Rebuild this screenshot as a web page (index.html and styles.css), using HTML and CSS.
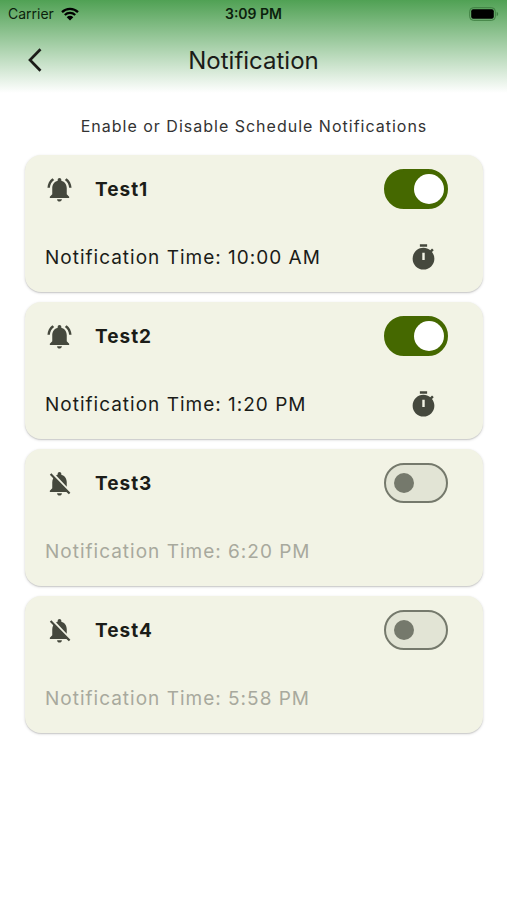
FILE: index.html
```html
<!DOCTYPE html>
<html lang="en">
<head>
<meta charset="utf-8">
<meta name="viewport" content="width=device-width, initial-scale=1">
<title>Notification</title>
<link rel="stylesheet" href="styles.css">
</head>
<body>
<svg class="sprite" aria-hidden="true">
  <symbol id="bell-on" viewBox="0 0 24 24"><path d="M7.58 4.08 6.15 2.65C3.75 4.48 2.17 7.3 2.03 10.5h2c.15-2.65 1.51-4.97 3.55-6.42zm12.39 6.42h2c-.15-3.2-1.73-6.02-4.12-7.85l-1.42 1.43c2.02 1.45 3.39 3.77 3.54 6.42zM18 11c0-3.07-1.64-5.64-4.5-6.32V4c0-.83-.67-1.5-1.5-1.5s-1.5.67-1.5 1.5v.68C7.63 5.36 6 7.92 6 11v5l-2 2v1h16v-1l-2-2v-5zm-6 11c.14 0 .27-.01.4-.04.65-.14 1.18-.58 1.44-1.18.1-.24.15-.5.15-.78h-4c.01 1.1.9 2 2.01 2z"/></symbol>
  <symbol id="bell-off" viewBox="0 0 24 24"><path d="M20 18.69 7.84 6.14 5.27 3.49 4 4.76l2.8 2.8v.01c-.52.99-.8 2.16-.8 3.42v5l-2 2v1h13.73l2 2L21 19.72l-1-1.03zM12 22c1.11 0 2-.89 2-2h-4c0 1.11.89 2 2 2zm6-7.32V11c0-3.08-1.64-5.64-4.5-6.32V4c0-.83-.67-1.5-1.5-1.5s-1.5.67-1.5 1.5v.68c-.15.03-.29.08-.42.12-.1.03-.2.07-.3.11h-.01c-.01 0-.01 0-.02.01-.23.09-.46.2-.68.31 0 0-.01 0-.01.01L18 14.68z"/></symbol>
  <symbol id="timer" viewBox="0 0 24 24"><path d="M19.03 7.39l1.42-1.42c-.45-.51-.9-.97-1.41-1.41L17.62 6c-1.55-1.26-3.5-2-5.62-2-4.97 0-9 4.03-9 9s4.02 9 9 9 9-4.03 9-9c0-2.12-.74-4.07-1.97-5.61zM13 14h-2V8h2v6zm2-13H9v2h6V1z"/></symbol>
</svg>

<header class="top">
  <div class="status">
    <div class="carrier">
      <span>Carrier</span>
      <svg class="wifi" viewBox="0 0 18 14" aria-hidden="true">
        <path d="M1 5.2a11.5 11.5 0 0 1 16 0M3.8 8a7.6 7.6 0 0 1 10.4 0" fill="none" stroke="currentColor" stroke-width="2.3"/>
        <path d="M9 13.6 5.7 10.2a4.7 4.7 0 0 1 6.6 0z" fill="currentColor"/>
      </svg>
    </div>
    <div class="clock">3:09 PM</div>
    <svg class="battery" viewBox="0 0 30 14" aria-hidden="true">
      <rect x=".7" y=".7" width="25.6" height="12.6" rx="3.6" fill="none" stroke="#3f7f42"/>
      <rect x="2.2" y="2.2" width="22.6" height="9.6" rx="2" fill="#000"/>
      <path d="M27.7 4.8c2 .8 2 3.6 0 4.4z" fill="#3f7f42"/>
    </svg>
  </div>
  <div class="bar">
    <button class="back" type="button" aria-label="Back">
      <svg viewBox="0 0 14 24" aria-hidden="true"><path d="M12.5 1.3 2 12l10.5 10.7" fill="none" stroke="currentColor" stroke-width="2.7"/></svg>
    </button>
    <h1 class="title">Notification</h1>
  </div>
</header>

<main class="content">
  <p class="intro">Enable or Disable Schedule Notifications</p>
  <section class="card">
    <div class="row">
      <svg class="icon"><use href="#bell-on"/></svg>
      <label class="name" for="t1">Test1</label>
      <input class="switch" type="checkbox" role="switch" id="t1" checked>
    </div>
    <div class="row">
      <p class="time">Notification Time: 10:00 AM</p>
      <button class="pick" type="button" aria-label="Change time"><svg class="icon"><use href="#timer"/></svg></button>
    </div>
  </section>
  <section class="card">
    <div class="row">
      <svg class="icon"><use href="#bell-on"/></svg>
      <label class="name" for="t2">Test2</label>
      <input class="switch" type="checkbox" role="switch" id="t2" checked>
    </div>
    <div class="row">
      <p class="time">Notification Time: 1:20 PM</p>
      <button class="pick" type="button" aria-label="Change time"><svg class="icon"><use href="#timer"/></svg></button>
    </div>
  </section>
  <section class="card">
    <div class="row">
      <svg class="icon"><use href="#bell-off"/></svg>
      <label class="name" for="t3">Test3</label>
      <input class="switch" type="checkbox" role="switch" id="t3">
    </div>
    <div class="row">
      <p class="time off">Notification Time: 6:20 PM</p>
    </div>
  </section>
  <section class="card">
    <div class="row">
      <svg class="icon"><use href="#bell-off"/></svg>
      <label class="name" for="t4">Test4</label>
      <input class="switch" type="checkbox" role="switch" id="t4">
    </div>
    <div class="row">
      <p class="time off">Notification Time: 5:58 PM</p>
    </div>
  </section>
</main>
</body>
</html>
```
FILE: styles.css
```css
* {
  box-sizing: border-box;
}

body {
  margin: 0;
  background: #fff;
  color: #1b1c18;
  font-family: Inter, "Liberation Sans", sans-serif;
}

button {
  padding: 0;
  border: 0;
  background: none;
  color: inherit;
}

svg {
  display: block;
}

.sprite {
  display: none;
}

.top {
  background: linear-gradient(#50a154, #fff);
}

.status {
  display: grid;
  grid-template-columns: 1fr auto 1fr;
  align-items: center;
  height: 27px;
  padding: 0 8px;
  color: #0c1f0d;
  font-size: 14px;
}

.carrier {
  display: flex;
  align-items: center;
  gap: 7px;
}

.wifi {
  width: 18px;
  height: 14px;
  color: #000;
}

.clock {
  font-weight: 600;
}

.battery {
  justify-self: end;
  width: 30px;
  height: 14px;
}

.bar {
  display: grid;
  grid-template-columns: 56px 1fr 56px;
  align-items: center;
  height: 66px;
}

.back {
  justify-self: end;
  margin-right: 14px;
}

.back svg {
  width: 14px;
  height: 24px;
}

.title {
  margin: 0;
  font-size: 24px;
  font-weight: 400;
  text-align: center;
}

.content {
  display: flex;
  flex-direction: column;
  gap: 10px;
  padding: 23px 24px 24px 25px;
}

.intro {
  margin: 0 0 9px;
  color: #333;
  font-size: 16px;
  line-height: 20px;
  letter-spacing: 1px;
  text-align: center;
}

.card {
  padding: 0 35px 0 20px;
  border-radius: 16px;
  background: #f2f3e5;
  box-shadow: 0 1px 3px rgba(0, 0, 0, 0.16), 0 1px 1px rgba(0, 0, 0, 0.1);
}

.row {
  display: flex;
  align-items: center;
  height: 68px;
}

.row + .row {
  height: 69px;
}

.icon {
  width: 29px;
  height: 29px;
  fill: #45483d;
}

.name {
  flex: 1;
  margin-left: 21px;
  font-size: 19px;
  font-weight: 700;
  letter-spacing: 1px;
}

.time {
  flex: 1;
  margin: 0;
  font-size: 19px;
  letter-spacing: 1px;
}

.time.off {
  color: #a8a99d;
}

.pick {
  margin-right: 10px;
}

.switch {
  appearance: none;
  display: flex;
  align-items: center;
  width: 64px;
  height: 40px;
  margin: 0;
  padding: 0 8px;
  border: 2px solid #75796c;
  border-radius: 20px;
  background: #e2e4d5;
}

.switch::before {
  content: "";
  width: 20px;
  height: 20px;
  border-radius: 50%;
  background: #75796c;
}

.switch:checked {
  justify-content: flex-end;
  padding: 0 2px;
  border-color: #456800;
  background: #456800;
}

.switch:checked::before {
  width: 30px;
  height: 30px;
  background: #fff;
}
```
